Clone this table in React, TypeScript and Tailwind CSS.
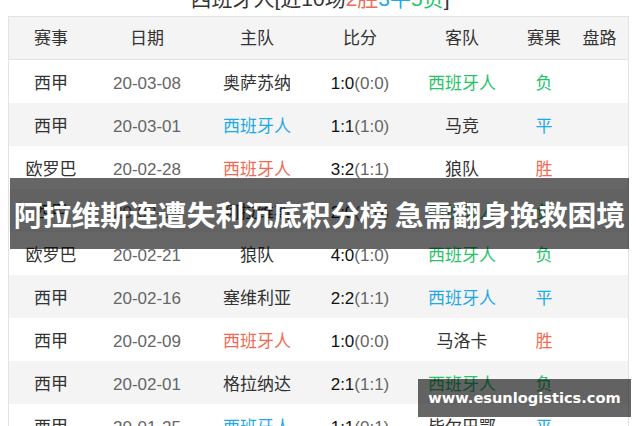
import clsx from 'clsx';

type Tone = 'red' | 'blue' | 'green' | 'plain';

interface Match {
    league: string;
    date: string;
    home: string;
    homeTone: Tone;
    score: string;
    half: string;
    away: string;
    awayTone: Tone;
    result: string;
    resultTone: Tone;
}

const matches: Match[] = [
    { league: '西甲', date: '20-03-08', home: '奥萨苏纳', homeTone: 'plain', score: '1:0', half: '(0:0)', away: '西班牙人', awayTone: 'green', result: '负', resultTone: 'green' },
    { league: '西甲', date: '20-03-01', home: '西班牙人', homeTone: 'blue', score: '1:1', half: '(1:0)', away: '马竞', awayTone: 'plain', result: '平', resultTone: 'blue' },
    { league: '欧罗巴', date: '20-02-28', home: '西班牙人', homeTone: 'red', score: '3:2', half: '(1:1)', away: '狼队', awayTone: 'plain', result: '胜', resultTone: 'red' },
    { league: '西甲', date: '20-02-23', home: '阿拉维斯', homeTone: 'plain', score: '2:0', half: '(1:0)', away: '西班牙人', awayTone: 'green', result: '负', resultTone: 'green' },
    { league: '欧罗巴', date: '20-02-21', home: '狼队', homeTone: 'plain', score: '4:0', half: '(1:0)', away: '西班牙人', awayTone: 'green', result: '负', resultTone: 'green' },
    { league: '西甲', date: '20-02-16', home: '塞维利亚', homeTone: 'plain', score: '2:2', half: '(1:1)', away: '西班牙人', awayTone: 'blue', result: '平', resultTone: 'blue' },
    { league: '西甲', date: '20-02-09', home: '西班牙人', homeTone: 'red', score: '1:0', half: '(0:0)', away: '马洛卡', awayTone: 'plain', result: '胜', resultTone: 'red' },
    { league: '西甲', date: '20-02-01', home: '格拉纳达', homeTone: 'plain', score: '2:1', half: '(1:1)', away: '西班牙人', awayTone: 'green', result: '负', resultTone: 'green' },
    { league: '西甲', date: '20-01-25', home: '西班牙人', homeTone: 'blue', score: '1:1', half: '(0:1)', away: '毕尔巴鄂', awayTone: 'plain', result: '平', resultTone: 'blue' },
];

const toneClass: Record<Tone, string> = {
    red: 'text-[#ef6b55]',
    blue: 'text-[#1fa9e6]',
    green: 'text-[#26c46a]',
    plain: 'text-[#333333]',
};

const grid = 'grid grid-cols-[84px_108px_112px_94px_110px_54px_57px] items-center text-center';

export default function App() {
    return (
        <div
            className="relative h-[426px] w-[640px] overflow-hidden bg-white text-[17px] text-[#333333]"
            style={{ fontFamily: '"Liberation Sans", "Noto Sans CJK SC", sans-serif' }}
        >
            <div className="-mt-[15px] h-[28px] text-center text-[21px] leading-[28px] whitespace-nowrap">
                西班牙人[近10场<span className="text-[#ef6b55]">2胜</span>
                <span className="text-[#1fa9e6]">3平</span>
                <span className="text-[#26c46a]">5负</span>]
            </div>

            <div className="mt-[3px] ml-[8px] w-[621px] border border-[#e3e3e3]">
                <div className={clsx(grid, 'h-[43px] border-b border-[#e3e3e3] bg-[#f4f4f4] pt-[2px]')}>
                    <span>赛事</span>
                    <span>日期</span>
                    <span>主队</span>
                    <span>比分</span>
                    <span>客队</span>
                    <span>赛果</span>
                    <span>盘路</span>
                </div>
                {matches.map((m, i) => (
                    <div
                        key={m.date}
                        className={clsx(grid, 'h-[43px] pt-[4px]', i % 2 === 1 ? 'bg-[#f4f4f4]' : 'bg-white')}
                    >
                        <span>{m.league}</span>
                        <span className="text-[#666666]">{m.date}</span>
                        <span className={toneClass[m.homeTone]}>{m.home}</span>
                        <span>
                            <span className="text-[#111111]">{m.score}</span>
                            <span className="text-[#666666]">{m.half}</span>
                        </span>
                        <span className={toneClass[m.awayTone]}>{m.away}</span>
                        <span className={toneClass[m.resultTone]}>{m.result}</span>
                        <span />
                    </div>
                ))}
            </div>

            <div className="absolute top-[178px] left-[10px] flex h-[71px] w-[619px] items-center justify-center bg-black/60">
                <span
                    className="text-[28.8px] font-bold whitespace-nowrap text-white"
                    style={{ fontFamily: '"Noto Sans CJK SC", sans-serif' }}
                >
                    阿拉维斯连遭失利沉底积分榜 急需翻身挽救困境
                </span>
            </div>

            <div className="absolute top-[379px] left-[418px] flex h-[38px] w-[213px] items-center justify-center bg-black/60">
                <span
                    className="text-[14.6px] font-bold text-white"
                    style={{ fontFamily: '"DejaVu Sans", sans-serif' }}
                >
                    www.esunlogistics.com
                </span>
            </div>
        </div>
    );
}
